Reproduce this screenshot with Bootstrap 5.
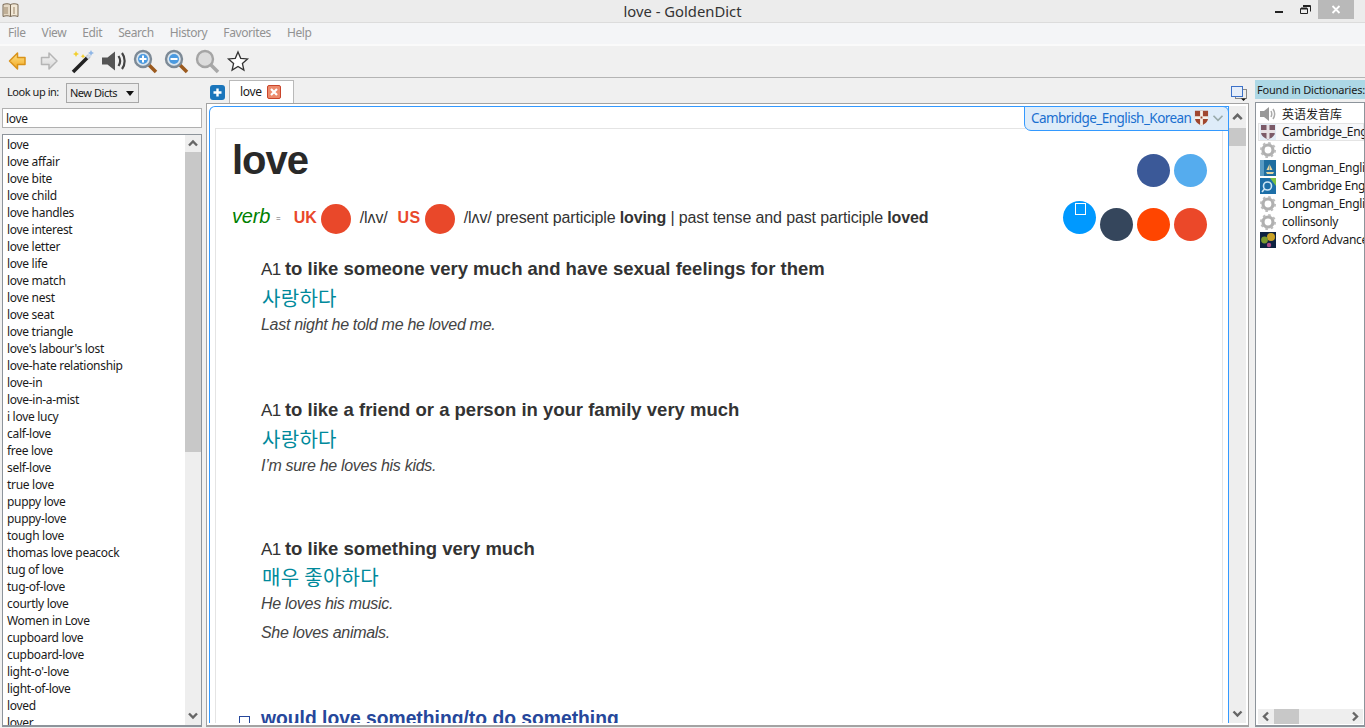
<!doctype html>
<html lang="en"><head><meta charset="utf-8"><title>love - GoldenDict</title>
<link href="https://cdn.jsdelivr.net/npm/bootstrap@5.3.0/dist/css/bootstrap.min.css" rel="stylesheet">
<style>
html,body{height:728px;overflow:hidden;margin:0;background:#f0f0f0;font:12px/17px "Noto Sans",sans-serif;letter-spacing:-.3px;color:#1a1a1a}
.gd-title{height:22px;background:#ececec;font-size:14.8px;color:#333;letter-spacing:0}
.gd-title .ttl{left:0;right:0;text-align:center;top:1px;line-height:20px}
.gd-app{margin:3px 0 0 2px}
.wc{width:26px;height:19px}
.wc-close{background:#b9b9b9;margin-right:11px;width:36px}
.gd-menu{height:22px;background:#f4f5f7;border-top:1px solid #dcdcdc;padding-left:8px;gap:16px;letter-spacing:-.4px;color:#929292;line-height:20px}
.gd-tool{height:28px;border-top:2px solid #fafafa;border-bottom:1px solid #b4b4b4;background:#f0f0f0;padding:3px 0 0 9px;gap:7px;box-sizing:content-box}
.gd-tool svg{width:24px;height:24px;display:block;overflow:visible}
.gd-main{height:650px}
.gd-left{width:204px;margin-left:2px;flex:none}
.gd-look{height:25px;padding:5px 0 0 5px;font-size:11px;letter-spacing:-.45px}
.gd-combo{width:73px;height:20px;margin-left:7px;border:1px solid #a8a8a8;background:#ececec;padding-left:3px;line-height:18px;margin-top:0}
.gd-caret{border:4px solid transparent;border-top:5px solid #111;border-bottom:0;margin:7px 4px 0 auto}
.gd-in{width:200px;height:20px;margin-top:5px;border:1px solid #b0b0b0;background:#fff;padding-left:3px;line-height:19px}
.gd-words{width:200px;height:593px;margin-top:6px;border:1px solid #8d949b;border-bottom-width:2px;background:#fff;overflow:hidden}
.gd-words .list-group{padding-top:1px;flex:1;border-radius:0;overflow:hidden}
.gd-words .list-group-item{padding:0 0 0 4px;height:17px;line-height:17px;font-size:12px;border:0;background:transparent;color:#1a1a1a;white-space:nowrap;flex:none}
.sb{width:16px;background:#eee;flex:none;color:#666}
.sb-v{width:17px}
.sb-a{height:17px;flex:none}
.sb-v .sb-a:first-child{height:22px}
.sb-t{background:#c8c8c8}
.sb-t1{height:300px;flex:none}
.sb-t2{height:18px;flex:none}
.gd-center{width:1043px;flex:none}
.gd-tabs{height:25px;flex:none}
.gd-plus{margin:7px 0 0 4px;width:15px;height:15px}
.gd-tab{width:65px;height:24px;margin:2px 0 0 4px;background:#fff;border:1px solid #b9b9b9;border-bottom:0;padding-left:10px;line-height:22px;gap:5px}
.gd-close{width:14px;height:14px;margin-top:4px}
.gd-dock{margin:8px 2px 0 auto;width:16px;height:15px}
.gd-view{height:624px;border:1px solid #a3a3a3;border-bottom-width:2px;background:#fff;padding:2px}
.gd-frame{flex:1;border:1px solid #39f;border-bottom:0;border-radius:6px 0 0 0;padding:0 5px;min-width:0}
.gd-article{margin-top:21px;flex:1;border:1px solid #e4e4e4;border-bottom:0;overflow:hidden;padding:0 15px 0 16px;font-family:"Liberation Sans",Arial,sans-serif;color:#333;letter-spacing:0}
.gd-dict{top:2px;right:19px;width:205px;height:25px;background:#deecf9;border:1px solid #39f;border-radius:0 6px 0 7px;color:#1a6fd0;font:13.500px/23px "Noto Sans",sans-serif;letter-spacing:-.55px;padding-left:6px;z-index:2;white-space:nowrap}
.gd-dict svg{margin-top:3px;flex:none}
.hw{font:700 40px/46px "Liberation Sans",Arial,sans-serif;letter-spacing:-1px;color:#292929;margin:0}
.hw-row{height:56px;padding-top:8px}
.hw-dots{margin-top:17px}
.dot{width:33px;height:33px;border-radius:50%;flex:none}
.dots{gap:4px}
.d-fb{background:#3b5998}.d-tw{background:#55acee}.d-ms{background:#09f}.d-tm{background:#35465c}.d-rd{background:#ff4500}.d-gp{background:#eb4829}
.d-tm,.d-rd,.d-gp{margin-top:7px}
.d-ms i{display:block;width:11px;height:12px;border:1px solid #fff;margin:2px 0 0 12px}
.pos-row{height:33px;font-size:16px;line-height:33px;letter-spacing:-.13px;white-space:nowrap;margin-top:16px;position:relative}
.verb{color:green;font-style:italic;font-size:20px;letter-spacing:-.2px;margin-top:-1px}
.eq{font-size:8px;margin:1px 13px 0 6px;color:#666;line-height:33px}
.lab{color:#e9482a;font-weight:700;letter-spacing:0}
.lab2{margin-left:1px;letter-spacing:.5px}
.say{width:30px;height:30px;border-radius:50%;background:#e9482a;margin:3px 9px 0 4px;flex:none}
.ph{margin-right:9px}
.pp b{color:#333}
.sense{margin-left:29px}
.s-h{font-size:18.500px;line-height:24px;color:#333;white-space:nowrap}
.s-h span{font-size:17px;letter-spacing:-.5px;margin-right:-1px}
.s-ko{font:20px/26px "Noto Sans CJK KR",sans-serif;color:#00899b;margin-top:3px;letter-spacing:.3px;padding-left:1px}
.s-ex{font-style:italic;font-size:16px;line-height:29px;letter-spacing:-.3px;color:#444}
.s-ko + .s-ex{margin-top:-1px}
.s1{margin-top:23px;height:141px}
.s2{height:139px}
.s3{height:170px}
.s3 .s-ko{margin-top:2px}
.phrase{font-weight:700;font-size:19.300px;line-height:24px;color:#26479b;margin-left:7px;white-space:nowrap}
.p-box{display:inline-block;width:11px;height:9px;border:1px solid #26479b;border-bottom:0;margin-right:11px}
.gd-right{width:110px;margin-left:6px;flex:none}
.gd-found{height:19px;margin-top:2px;background:#add8e6;font-size:11px;line-height:19px;padding-left:2px;white-space:nowrap;overflow:hidden;letter-spacing:-.2px}
.gd-dlist{height:625px;margin-top:3px;border:1px solid #8d949b;border-bottom-width:2px;background:#fff;padding:2px 0 0 2px;overflow:hidden;position:relative;width:110px}
.gd-dlist .list-group-item{height:18px;padding:0 0 0 2px;border:0;background:transparent;white-space:nowrap;font-size:12px;line-height:18px;gap:6px;overflow:hidden;color:#1a1a1a;flex:none;border-radius:0}
.gd-dlist .list-group-item svg{width:16px;height:16px;flex:none;margin-top:1px}
.gd-dlist .list-group-item.on{background:#f7f8fa;box-shadow:inset 0 0 0 1px #e4e4e4}
.hs{left:2px;right:1px;bottom:1px;height:15px;background:#eee;z-index:1}
.hs-t{width:25px;background:#c8c8c8;height:15px}
.hs svg{width:16px;height:15px;flex:none}
.zh{font-family:"Noto Sans CJK SC",sans-serif;letter-spacing:0}
</style></head><body>
<svg width="0" height="0" class="position-absolute">
<defs>
<linearGradient id="gy" x1="0" y1="0" x2="0" y2="1"><stop offset="0" stop-color="#fde38a"/><stop offset="1" stop-color="#f3a71f"/></linearGradient>
<linearGradient id="gg" x1="0" y1="0" x2="0" y2="1"><stop offset="0" stop-color="#f5f5f5"/><stop offset="1" stop-color="#d6d6d6"/></linearGradient>
</defs>
<symbol id="gear" viewBox="0 0 16 16"><circle cx="8" cy="8" r="5" fill="none" stroke="#b0b0b0" stroke-width="3.200"/><circle cx="8" cy="8" r="7" fill="none" stroke="#bcbcbc" stroke-width="2" stroke-dasharray="2.600 2.900"/><circle cx="8" cy="8" r="2.300" fill="#fff"/></symbol>
<symbol id="chev" viewBox="0 0 16 16"><path d="M4 10l4-4 4 4" fill="none" stroke="#666" stroke-width="2.400"/></symbol>
<symbol id="shield" viewBox="0 0 16 16"><path d="M1 0h14v8c0 4-3.500 6.500-7 8C4.500 14.500 1 12 1 8z" fill="#a0472f"/><path d="M6.500 0h3v16h-3zM1 6h14v3H1z" fill="#f4f0e8"/><path d="M7 6.500h2v2H7z" fill="#a0472f"/></symbol>
<symbol id="shield2" viewBox="0 0 16 16"><rect width="16" height="16" fill="#e2ecf7"/><path d="M1 1h14v7c0 4-3.500 6-7 7.500C4.500 14 1 12 1 8z" fill="#7b5a68"/><path d="M6.500 1h3v14h-3zM1 6h14v3H1z" fill="#e6e0e4"/></symbol>
</svg>

<header class="gd-title d-flex position-relative">
 <svg class="gd-app" width="17" height="14" viewBox="0 0 17 14"><path d="M1 1.500c3-1 5-1 7.500 0v12C6 12.500 4 12.500 1 13.500z" fill="#e4d8c4" stroke="#7a6a55"/><path d="M16 1.500c-3-1-5-1-7.500 0v12c2.500-1 4.500-1 7.500 0z" fill="#f2e8d6" stroke="#7a6a55"/><path d="M3 4v7M5 4v7M12 4v7" stroke="#9a8568"/></svg>
 <div class="ttl position-absolute">love - GoldenDict</div>
 <div class="ms-auto d-flex">
  <div class="wc d-flex justify-content-center"><svg width="9" height="19" viewBox="0 0 9 19"><path d="M0 12h8" stroke="#222" stroke-width="2"/></svg></div>
  <div class="wc d-flex justify-content-center"><svg width="11" height="19" viewBox="0 0 11 19"><path d="M3 5.500h7.500v6M.5 8.500h7v5h-7z" fill="none" stroke="#222"/><path d="M3 6h7M1 8.500h6" stroke="#222" stroke-width="2"/></svg></div>
  <div class="wc wc-close d-flex justify-content-center"><svg width="10" height="19" viewBox="0 0 10 19"><path d="M1.500 6l7 7M8.500 6l-7 7" stroke="#fff" stroke-width="1.800"/></svg></div>
 </div>
</header>
<nav class="gd-menu d-flex"><span>File</span><span>View</span><span>Edit</span><span>Search</span><span>History</span><span>Favorites</span><span>Help</span></nav>
<div class="gd-tool d-flex">
 <svg viewBox="3 0 24 24"><path d="M3.500 12l8-8v4.500H19v7h-7.500V20z" fill="url(#gy)" stroke="#d9931a" stroke-width="1.500" stroke-linejoin="round"/></svg>
 <svg viewBox="4 0 24 24"><path d="M21 12l-8-8v4.500H5.500v7H13V20z" fill="url(#gg)" stroke="#b5b5b5" stroke-width="1.500" stroke-linejoin="round"/></svg>
 <svg viewBox="0 0 24 24"><path d="M2 23L18 7" stroke="#222" stroke-width="3.500"/><path d="M16 9l3-3" stroke="#cfd8e6" stroke-width="3.500"/><path d="M5 2l1 2 2 1-2 1-1 2-1-2-2-1 2-1zM12 5l.8 1.500 1.500.8-1.500.8-.8 1.500-.8-1.500-1.500-.8 1.500-.8z" fill="#f2cf2e"/><path d="M20 1l1 2 2 1-2 1-1 2-1-2-2-1 2-1z" fill="#8fb6e6"/></svg>
 <svg viewBox="0 0 24 24"><path d="M0 8.500h5.500L13 2.500v19l-7.500-6H0z" fill="#555"/><path d="M16.500 7c2 3 2 7 0 10M20 4c3.500 4.500 3.500 11.500 0 16" fill="none" stroke="#444" stroke-width="2.200"/></svg>
 <svg viewBox="0 0 24 24"><path d="M15 15l8 8" stroke="#9b5a1e" stroke-width="3.500"/><circle cx="10" cy="10" r="8" fill="#dbe6ef" stroke="#7d8a96" stroke-width="2.400"/><circle cx="10" cy="10" r="5" fill="#4b9ae0"/><path d="M6.500 10h7M10 6.500v7" stroke="#fff" stroke-width="2"/></svg>
 <svg viewBox="0 0 24 24"><path d="M15 15l8 8" stroke="#9b5a1e" stroke-width="3.500"/><circle cx="10" cy="10" r="8" fill="#dbe6ef" stroke="#7d8a96" stroke-width="2.400"/><circle cx="10" cy="10" r="5" fill="#4b9ae0"/><path d="M6.500 10h7" stroke="#fff" stroke-width="2"/></svg>
 <svg viewBox="0 0 24 24"><path d="M15 15l8 8" stroke="#a8a8a8" stroke-width="3.500"/><circle cx="10" cy="10" r="8" fill="#dcdcdc" stroke="#a5a5a5" stroke-width="2.400"/></svg>
 <svg viewBox="0 0 24 24"><path d="M12 3l2.700 6.300 6.800.6-5.100 4.500 1.500 6.700L12 17.500 6.100 21.100l1.500-6.700L2.500 9.900l6.800-.6z" fill="#fff" stroke="#333" stroke-width="1.300"/></svg>
</div>
<main class="gd-main d-flex">
 <section class="gd-left d-flex flex-column">
  <div class="gd-look d-flex"><span>Look up in:</span><div class="gd-combo d-flex"><span>New Dicts</span><i class="gd-caret"></i></div></div>
  <div class="gd-in">love</div>
  <div class="gd-words d-flex">
   <ul class="list-group">
<li class="list-group-item">love</li><li class="list-group-item">love affair</li><li class="list-group-item">love bite</li><li class="list-group-item">love child</li><li class="list-group-item">love handles</li><li class="list-group-item">love interest</li><li class="list-group-item">love letter</li><li class="list-group-item">love life</li><li class="list-group-item">love match</li><li class="list-group-item">love nest</li><li class="list-group-item">love seat</li><li class="list-group-item">love triangle</li><li class="list-group-item">love's labour's lost</li><li class="list-group-item">love-hate relationship</li><li class="list-group-item">love-in</li><li class="list-group-item">love-in-a-mist</li><li class="list-group-item">i love lucy</li><li class="list-group-item">calf-love</li><li class="list-group-item">free love</li><li class="list-group-item">self-love</li><li class="list-group-item">true love</li><li class="list-group-item">puppy love</li><li class="list-group-item">puppy-love</li><li class="list-group-item">tough love</li><li class="list-group-item">thomas love peacock</li><li class="list-group-item">tug of love</li><li class="list-group-item">tug-of-love</li><li class="list-group-item">courtly love</li><li class="list-group-item">Women in Love</li><li class="list-group-item">cupboard love</li><li class="list-group-item">cupboard-love</li><li class="list-group-item">light-o'-love</li><li class="list-group-item">light-of-love</li><li class="list-group-item">loved</li><li class="list-group-item">lover</li>
   </ul>
   <div class="sb d-flex flex-column"><svg class="sb-a" viewBox="0 0 16 17"><use href="#chev"/></svg><div class="sb-t sb-t1"></div><div class="flex-grow-1"></div><svg class="sb-a" viewBox="0 0 16 17"><use href="#chev" transform="rotate(180 8 8)"/></svg></div>
  </div>
 </section>
 <section class="gd-center d-flex flex-column">
  <div class="gd-tabs d-flex">
   <svg class="gd-plus" viewBox="0 0 15 15"><rect width="15" height="15" rx="3" fill="#1a75bb"/><path d="M7.500 3.500v8M3.500 7.500h8" stroke="#fff" stroke-width="2.400"/></svg>
   <div class="gd-tab d-flex"><span>love</span><svg class="gd-close" viewBox="0 0 14 14"><rect x=".5" y=".5" width="13" height="13" rx="1.500" fill="#ec8a6c" stroke="#c9452b"/><path d="M4 4l6 6M10 4l-6 6" stroke="#fff" stroke-width="2.200"/></svg></div>
   <svg class="gd-dock" viewBox="0 0 16 15"><rect x="4.500" y="3.500" width="11" height="9" fill="#eee" stroke="#888"/><rect x=".5" y=".5" width="11" height="10" fill="#e6eefa" stroke="#3c71c8"/><path d="M10 12.500h5L12.500 15z" fill="#111"/></svg>
  </div>
  <div class="gd-view d-flex position-relative">
   <div class="gd-dict position-absolute d-flex"><span>Cambridge_English_Korean</span><svg class="ms-1" width="15" height="16" viewBox="0 0 16 16"><use href="#shield"/></svg><svg class="ms-1" width="12" height="16" viewBox="0 0 16 16"><path d="M2 5l6 6 6-6" fill="none" stroke="#9aa" stroke-width="2.200"/></svg></div>
   <div class="gd-frame d-flex">
    <article class="gd-article flex-grow-1">
     <div class="hw-row d-flex"><h1 class="hw">love</h1><div class="ms-auto d-flex dots hw-dots"><div class="dot d-fb"></div><div class="dot d-tw"></div></div></div>
     <div class="pos-row d-flex">
      <span class="verb">verb</span><span class="eq">=</span>
      <span class="lab">UK</span><i class="say"></i><span class="ph">/lʌv/</span>
      <span class="lab lab2">US</span><i class="say"></i><span class="pp">/lʌv/ present participle <b>loving</b> | past tense and past participle <b>loved</b></span>
      <div class="ms-auto d-flex dots"><div class="dot d-ms"><i></i></div><div class="dot d-tm"></div><div class="dot d-rd"></div><div class="dot d-gp"></div></div>
     </div>
     <div class="sense s1"><div class="s-h"><span>A1</span> <b>to like someone very much and have sexual feelings for them</b></div><div class="s-ko">사랑하다</div><div class="s-ex">Last night he told me he loved me.</div></div>
     <div class="sense s2"><div class="s-h"><span>A1</span> <b>to like a friend or a person in your family very much</b></div><div class="s-ko">사랑하다</div><div class="s-ex">I’m sure he loves his kids.</div></div>
     <div class="sense s3"><div class="s-h"><span>A1</span> <b>to like something very much</b></div><div class="s-ko">매우 좋아하다</div><div class="s-ex">He loves his music.</div><div class="s-ex">She loves animals.</div></div>
     <div class="phrase"><i class="p-box"></i>would love something/to do something</div>
    </article>
   </div>
   <div class="sb sb-v d-flex flex-column"><svg class="sb-a" viewBox="0 0 16 17"><use href="#chev"/></svg><div class="sb-t sb-t2"></div><div class="flex-grow-1"></div><svg class="sb-a" viewBox="0 0 16 17"><use href="#chev" transform="rotate(180 8 8)"/></svg></div>
  </div>
 </section>
 <section class="gd-right d-flex flex-column">
  <div class="gd-found">Found in Dictionaries:</div>
  <div class="gd-dlist">
   <ul class="list-group">
    <li class="list-group-item d-flex"><svg viewBox="0 0 16 16"><path d="M0 5h4l5-4v14l-5-4H0z" fill="#999"/><path d="M11 5c1 2 1 4 0 6M13 3c2 3 2 7 0 10" fill="none" stroke="#aaa" stroke-width="1.500"/></svg><span class="zh">英语发音库</span></li>
    <li class="list-group-item d-flex on"><svg viewBox="0 0 16 16"><use href="#shield2"/></svg><span>Cambridge_English</span></li>
    <li class="list-group-item d-flex"><svg viewBox="0 0 16 16"><use href="#gear"/></svg><span>dictio</span></li>
    <li class="list-group-item d-flex"><svg viewBox="0 0 16 16"><rect width="16" height="16" fill="#1f6d9f"/><path d="M0 0h4v16H0z" fill="#5a9bc4"/><path d="M6 12h8l-1 2H7zM9.500 3v9M9.500 4l3 6h-3zM9 5l-2.500 5H9z" fill="#e7d6a0"/></svg><span>Longman_English</span></li>
    <li class="list-group-item d-flex"><svg viewBox="0 0 16 16"><rect width="16" height="16" fill="#1d6fa8"/><path d="M10 0h6v8z" fill="#7cc144"/><circle cx="7.500" cy="8" r="4" fill="none" stroke="#cfe7f5" stroke-width="1.600"/><path d="M4.500 11L2 14" stroke="#cfe7f5" stroke-width="1.600"/></svg><span>Cambridge English</span></li>
    <li class="list-group-item d-flex"><svg viewBox="0 0 16 16"><use href="#gear"/></svg><span>Longman_English</span></li>
    <li class="list-group-item d-flex"><svg viewBox="0 0 16 16"><use href="#gear"/></svg><span>collinsonly</span></li>
    <li class="list-group-item d-flex"><svg viewBox="0 0 16 16"><rect width="16" height="16" fill="#0e2240"/><circle cx="11" cy="5" r="4" fill="#c9a227"/><circle cx="4.500" cy="8" r="3.400" fill="#7a9a2e"/><circle cx="9" cy="13" r="2.200" fill="#b0508a"/></svg><span>Oxford Advanced</span></li>
   </ul>
   <div class="hs position-absolute d-flex"><svg viewBox="0 0 16 15"><path d="M10 3.500L6 7.500l4 4" fill="none" stroke="#666" stroke-width="2.400"/></svg><div class="hs-t"></div><svg class="ms-auto" viewBox="0 0 16 15"><path d="M6 3.500l4 4-4 4" fill="none" stroke="#666" stroke-width="2.400"/></svg></div>
  </div>
 </section>
</main>
</body></html>
